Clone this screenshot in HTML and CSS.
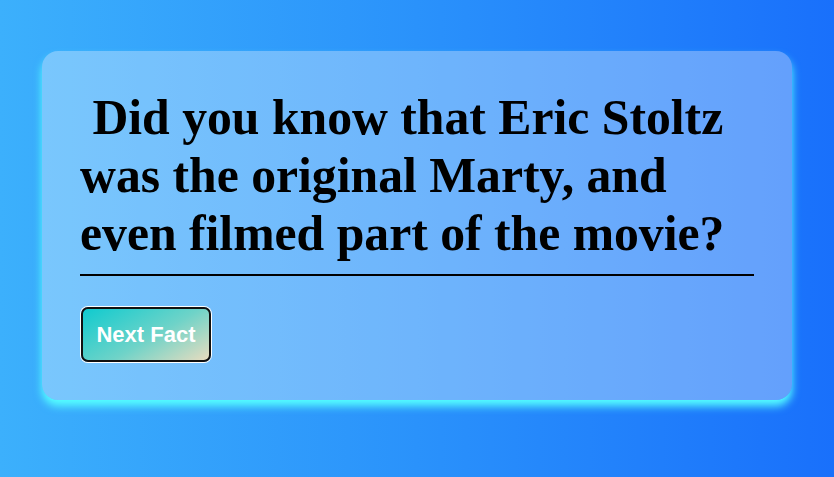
FILE: index.html
```html
<!DOCTYPE html>
<html>
<head>
<meta charset="utf-8">
<link rel="stylesheet" href="styles.css">
</head>
<body>
<main class="page">
  <section class="card">
    <h1 class="fact">&nbsp;Did you know that Eric Stoltz was the original Marty, and even filmed part of the movie?</h1>
    <hr class="rule">
    <button class="next-btn">Next Fact</button>
  </section>
</main>
</body>
</html>
```

FILE: styles.css
```css
html, body {
  margin: 0;
  padding: 0;
}
body {
  width: 834px;
  height: 477px;
  overflow: hidden;
  background: linear-gradient(90deg, #3cb0fc 0%, #2a92fb 50%, #1970fb 100%);
}
.page {
  display: flex;
  justify-content: center;
  padding-top: 51px;
}
.card {
  box-sizing: border-box;
  width: 750px;
  padding: 38px 38px 38px;
  border-radius: 16px;
  background: rgba(255, 255, 255, 0.32);
  box-shadow: 0 6px 8px #55ffff;
  display: flex;
  flex-direction: column;
  align-items: flex-start;
}
.fact {
  margin: 0;
  font-family: "Liberation Serif", "Times New Roman", serif;
  font-weight: bold;
  font-size: 49.7px;
  line-height: 57.8px;
  color: #000;
}
.rule {
  align-self: stretch;
  margin: 12px 0 31px;
  border: 0;
  height: 2px;
  background: #000;
}
.next-btn {
  box-sizing: border-box;
  width: 130px;
  height: 55px;
  margin-left: 1px;
  border: 2px solid #111;
  border-radius: 7px;
  box-shadow: 0 0 0 1px #fff;
  background: linear-gradient(150deg, #0fcbcf 0%, #6fd3c8 55%, #e8dcbf 100%);
  color: #fff;
  font-family: "Liberation Sans", Arial, sans-serif;
  font-weight: bold;
  font-size: 22px;
  padding: 0;
  cursor: pointer;
}
```
